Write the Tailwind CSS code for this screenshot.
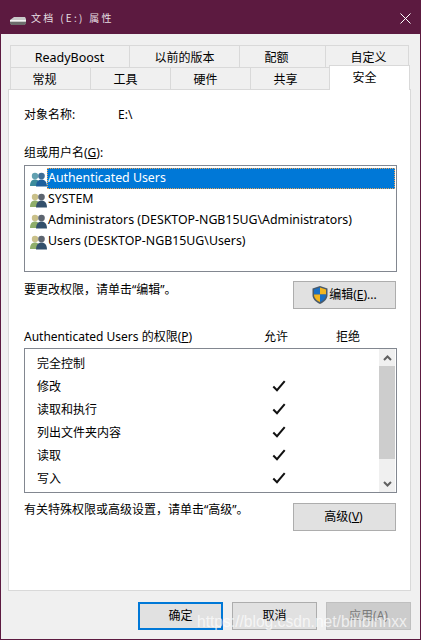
<!DOCTYPE html>
<html><head><meta charset="utf-8"><script src="https://cdn.jsdelivr.net/npm/@tailwindcss/browser@4"></script></head>
<body class="m-0 overflow-hidden">
<svg class="hidden"><defs>
<symbol id="ug" viewBox="0 0 17 16"><circle cx="5" cy="5" r="3.2" fill="#c9c08a"/><path d="M0 15c0-4.5 2-6.5 5-6.5s5 2 5 6.500z" fill="#8fae6a"/><circle cx="11.500" cy="5" r="3.300" fill="#5d6570"/><path d="M6 15.500c0-4.500 2.300-7 5.500-7s5.500 2.500 5.500 7z" fill="#33506b"/></symbol>
<symbol id="ub" viewBox="0 0 17 16"><circle cx="5" cy="5" r="3.200" fill="#62a0b0"/><path d="M0 15c0-4.500 2-6.500 5-6.500s5 2 5 6.500z" fill="#3c8c9c"/><circle cx="11.500" cy="5" r="3.300" fill="#3d6d96"/><path d="M6 15.500c0-4.500 2.300-7 5.500-7s5.500 2.500 5.500 7z" fill="#1d5f9c"/></symbol>
<symbol id="ck" viewBox="0 0 14 12"><path d="M1.300 6.500l3.700 3.700 7.700-9" fill="none" stroke="#111" stroke-width="2"/></symbol>
</defs></svg>
<div class="relative w-[421px] h-[640px] border border-[#5c1a40] bg-[#f0f0f0] flex flex-col text-xs text-black" style="font-family:'Noto Sans','Noto Sans CJK SC',sans-serif">
  <div class="h-[33px] shrink-0 bg-[#5c1a40] flex items-center text-white">
    <svg class="ml-[9px] w-[16px] h-[10px] mt-[6px]" viewBox="0 0 16 10"><path d="M0 4l4-3h11l1 2v4l-2 2H2L0 7z" fill="#c9c9c9"/><path d="M0 4h16v1H0z" fill="#f4f4f4"/><path d="M0 6h16v2l-2 1H2L0 8z" fill="#6d6d6d"/></svg>
    <span class="ml-[5px] text-[10px] tracking-[2.300px] opacity-85 mt-[1px]" style="font-family:'Noto Sans CJK SC',sans-serif">文档 (E:) 属性</span>
    <svg class="ml-auto mr-[9px] mt-[1px] w-[11px] h-[11px]" viewBox="0 0 11 11"><path d="M.5.500l10 10M10.500.500l-10 10" stroke="#fff" stroke-width="1"/></svg>
  </div>
  <div class="flex-1 flex flex-col pl-[7px] pr-[9px]">
    <div class="relative mt-[11px] h-[44px] shrink-0">
      <div class="flex ml-[2px] h-[22px] text-[12.500px]">
        <div class="w-[120px] border border-[#d9d9d9] border-b-0 flex items-center justify-center pt-[3px] pr-[1px]">ReadyBoost</div>
        <div class="w-[110px] border border-[#d9d9d9] border-b-0 border-l-0 flex items-center justify-center pt-[3px] text-xs">以前的版本</div>
        <div class="w-[86px] border border-[#d9d9d9] border-b-0 border-l-0 flex items-center justify-center pt-[3px] pr-[12px] text-xs">配额</div>
        <div class="w-[83px] border border-[#d9d9d9] border-b-0 border-l-0 flex items-center justify-center pt-[3px] pl-[3px] text-xs">自定义</div>
      </div>
      <div class="flex ml-[2px] h-[22px] text-xs">
        <div class="w-[81px] border border-[#d9d9d9] border-b-0 flex items-center justify-center pt-[2px] pr-[12px]">常规</div>
        <div class="w-[80px] border border-[#d9d9d9] border-b-0 border-l-0 flex items-center justify-center pt-[2px] pr-[10px]">工具</div>
        <div class="w-[80px] border border-[#d9d9d9] border-b-0 border-l-0 flex items-center justify-center pt-[2px] pr-[10px]">硬件</div>
        <div class="w-[80px] border border-[#d9d9d9] border-b-0 border-l-0 flex items-center justify-center pt-[2px] pr-[10px]">共享</div>
      </div>
      <div class="absolute z-10 left-[321px] top-[20px] w-[81px] h-[25px] bg-white border border-[#d9d9d9] border-b-0 flex items-center justify-center text-xs pr-[10px]">安全</div>
    </div>
    <div class="w-[403px] h-[502px] shrink-0 bg-white border border-[#d9d9d9] px-[15px] flex flex-col">
      <div class="flex mt-[15px] h-[20px] items-center"><span class="w-[94px]">对象名称:</span><span>E:\</span></div>
      <div class="mt-[18px] h-[20px] flex items-center">组或用户名(<span class="underline">G</span>):</div>
      <div class="mt-[2px] h-[107px] w-[373px] border border-[#828790] pt-[2px] px-[1px] text-[12.350px]">
        <div class="h-[21px] flex items-center pl-[4px]"><svg class="w-[17px] h-[16px]"><use href="#ub"/></svg><span class="flex-1 h-[21px] bg-[#0078d7] text-white flex items-center outline outline-dotted outline-[#e8a35a] -outline-offset-1 px-[1px]">Authenticated Users</span></div>
        <div class="h-[21px] flex items-center pl-[4px]"><svg class="w-[17px] h-[16px]"><use href="#ug"/></svg><span class="ml-[1px]">SYSTEM</span></div>
        <div class="h-[21px] flex items-center pl-[4px]"><svg class="w-[17px] h-[16px]"><use href="#ug"/></svg><span class="ml-[1px]">Administrators (DESKTOP-NGB15UG\Administrators)</span></div>
        <div class="h-[21px] flex items-center pl-[4px]"><svg class="w-[17px] h-[16px]"><use href="#ug"/></svg><span class="ml-[1px]">Users (DESKTOP-NGB15UG\Users)</span></div>
      </div>
      <div class="flex mt-[9px] justify-between w-[372px] items-start">
        <span class="mt-[1px]">要更改权限，请单击“编辑”。</span>
        <div class="w-[103px] h-[28px] bg-[#e1e1e1] border border-[#adadad] flex items-center justify-center gap-[1px]">
          <svg class="w-[16px] h-[18px]" viewBox="0 0 16 18"><path d="M8 0l7.500 2.500V9c0 4-3 7-7.500 9C3.500 16 .5 13 .5 9V2.500z" fill="#4a5a6a"/><path d="M8 1.500v7H2V3.500z" fill="#1a6fc4"/><path d="M8 1.500l6 2v5H8z" fill="#f3b61f"/><path d="M2 8.500h6v7.500C4.500 14.500 2 12 2 8.500z" fill="#f3b61f"/><path d="M8 8.500h6c0 3.500-2.500 6-6 7.500z" fill="#1a6fc4"/></svg>
          <span>编辑(<span class="underline">E</span>)...</span>
        </div>
      </div>
      <div class="relative mt-[17px] h-[20px] w-[372px] flex items-center pt-[1px]">Authenticated Users 的权限(<span class="underline">P</span>)<span class="absolute left-[240px]">允许</span><span class="absolute left-[312px]">拒绝</span></div>
      <div class="mt-[2px] h-[145px] w-[373px] border border-[#828790] flex">
        <div class="flex-1 pt-[3px] pl-[12px]">
          <div class="relative h-[23px] flex items-center">完全控制</div>
          <div class="relative h-[23px] flex items-center">修改<svg class="absolute left-[235px] top-[5px] w-[14px] h-[12px]"><use href="#ck"/></svg></div>
          <div class="relative h-[23px] flex items-center">读取和执行<svg class="absolute left-[235px] top-[5px] w-[14px] h-[12px]"><use href="#ck"/></svg></div>
          <div class="relative h-[23px] flex items-center">列出文件夹内容<svg class="absolute left-[235px] top-[5px] w-[14px] h-[12px]"><use href="#ck"/></svg></div>
          <div class="relative h-[23px] flex items-center">读取<svg class="absolute left-[235px] top-[5px] w-[14px] h-[12px]"><use href="#ck"/></svg></div>
          <div class="relative h-[23px] flex items-center">写入<svg class="absolute left-[235px] top-[5px] w-[14px] h-[12px]"><use href="#ck"/></svg></div>
        </div>
        <div class="w-[16px] mr-[1px] bg-[#f0f0f0] flex flex-col">
          <div class="h-[17px] flex items-center justify-center"><svg class="w-[9px] h-[6px]" viewBox="0 0 9 6"><path d="M1 5l3.500-3.500L8 5" fill="none" stroke="#606060" stroke-width="2"/></svg></div>
          <div class="h-[93px] bg-[#cdcdcd]"></div>
          <div class="mt-auto h-[17px] flex items-center justify-center"><svg class="w-[9px] h-[6px]" viewBox="0 0 9 6"><path d="M1 1l3.500 3.500L8 1" fill="none" stroke="#606060" stroke-width="2"/></svg></div>
        </div>
      </div>
      <div class="flex mt-[10px] justify-between w-[372px] items-start">
        <span class="mt-[-1px]">有关特殊权限或高级设置，请单击“高级”。</span>
        <div class="w-[103px] h-[28px] bg-[#e1e1e1] border border-[#adadad] flex items-center justify-center pr-[2px]"><span>高级(<span class="underline">V</span>)</span></div>
      </div>
    </div>
    <div class="flex gap-[9px] ml-[130px] mt-[11px] text-xs">
      <div class="w-[86px] h-[28px] bg-[#e1e1e1] border-2 border-[#0078d7] flex items-center justify-center">确定</div>
      <div class="w-[86px] h-[28px] bg-[#e1e1e1] border border-[#adadad] flex items-center justify-center">取消</div>
      <div class="w-[86px] h-[28px] bg-[#cccccc] border border-[#bfbfbf] flex items-center justify-center text-[#7a7a7a]">应用(A)</div>
    </div>
  </div>
  <div class="absolute left-[196px] top-[610px] text-[15.600px] leading-[22px] whitespace-nowrap text-white/70" style="font-family:'Liberation Sans',sans-serif">https://blog.csdn.net/binbinhxx</div>
</div>
</body></html>
